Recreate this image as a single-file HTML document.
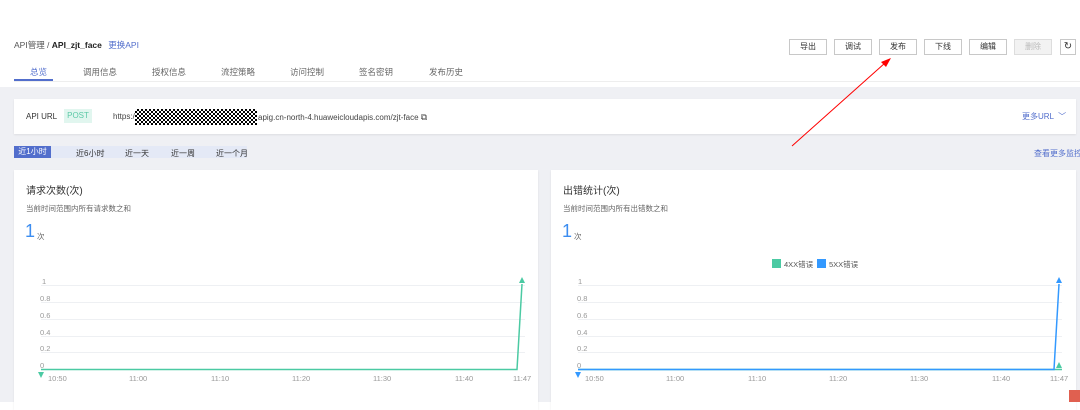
<!DOCTYPE html><html><head><meta charset="utf-8"><style>
*{margin:0;padding:0;box-sizing:border-box}
body{width:1080px;height:402px;overflow:hidden;background:#fff;font-family:"Liberation Sans","Noto Sans CJK SC",sans-serif;font-size:8px;color:#333;position:relative}
.a{position:absolute;white-space:nowrap}
.btn{position:absolute;top:39px;height:16px;width:38px;border:1px solid #c8c8c8;background:#fff;font-size:8px;text-align:center;line-height:14px;color:#333}
.card{position:absolute;background:#fff;box-shadow:0 1px 2px rgba(0,0,0,.08)}
.grid{position:absolute;height:1px;background:#eef0f3}
.yl{position:absolute;font-size:7.5px;color:#999}
.xl{position:absolute;font-size:7.5px;color:#999}
</style></head><body>
<div class="a" style="left:14px;top:39px;font-size:8.5px;color:#555">API管理 / <b style="color:#222">API_zjt_face</b> <span style="color:#526ecc;margin-left:4px">更换API</span></div>
<div class="btn" style="left:789px">导出</div>
<div class="btn" style="left:834px">调试</div>
<div class="btn" style="left:879px">发布</div>
<div class="btn" style="left:924px">下线</div>
<div class="btn" style="left:969px">编辑</div>
<div class="btn" style="left:1014px;background:#f2f2f2;color:#bbb;border-color:#ddd">删除</div>
<div class="btn" style="left:1060px;width:16px;font-size:10px">↻</div>
<div class="a" style="left:14px;top:66px;font-size:8.5px;color:#666">
<span class="a" style="left:16px;color:#526ecc">总览</span>
<span class="a" style="left:69px">调用信息</span>
<span class="a" style="left:138px">授权信息</span>
<span class="a" style="left:207px">流控策略</span>
<span class="a" style="left:276px">访问控制</span>
<span class="a" style="left:345px">签名密钥</span>
<span class="a" style="left:415px">发布历史</span>
</div>
<div class="a" style="left:14px;top:79px;width:39px;height:2px;background:#526ecc"></div>
<div class="a" style="left:14px;top:81px;width:1066px;height:1px;background:#eee"></div>
<div class="a" style="left:0;top:87px;width:1080px;height:315px;background:#eff0f4"></div>
<div class="card" style="left:14px;top:99px;width:1062px;height:35px"></div>
<div class="a" style="left:26px;top:112px;color:#333">API URL</div>
<div class="a" style="left:64px;top:109px;width:28px;height:14px;background:#e1f6ef;color:#5cc9a7;text-align:center;line-height:14px">POST</div>
<div class="a" style="left:113px;top:112px;color:#444">https:/</div>
<div class="a" style="left:135px;top:109px;width:122px;height:16px;background:repeating-conic-gradient(#000 0 25%,#fff 0 50%) 0 0/4px 4px"></div>
<div class="a" style="left:258px;top:112px;color:#444">apig.cn-north-4.huaweicloudapis.com/zjt-face <span style="font-size:9px">⧉</span></div>
<div class="a" style="left:1022px;top:111px;color:#526ecc">更多URL &nbsp;﹀</div>
<div class="a" style="left:14px;top:146px;width:233px;height:12px;background:#e4e9f6"></div>
<div class="a" style="left:14px;top:146px;width:37px;height:12px;background:#526ecc;color:#fff;text-align:center;line-height:12px">近1小时</div>
<div class="a" style="left:76px;top:148px">近6小时</div>
<div class="a" style="left:125px;top:148px">近一天</div>
<div class="a" style="left:171px;top:148px">近一周</div>
<div class="a" style="left:216px;top:148px">近一个月</div>
<div class="a" style="left:1034px;top:148px;color:#526ecc">查看更多监控</div>
<div class="card" style="left:14px;top:170px;width:524px;height:240px"></div>
<div class="card" style="left:551px;top:170px;width:525px;height:240px"></div>
<div class="a" style="left:26px;top:182px;font-size:10px">请求次数(次)</div>
<div class="a" style="left:26px;top:203px;font-size:7.5px;color:#666">当前时间范围内所有请求数之和</div>
<div class="a" style="left:25px;top:221px;font-size:18px;color:#3c8df0">1</div>
<div class="a" style="left:37px;top:231px;font-size:7.5px;color:#666">次</div>
<div class="a" style="left:563px;top:182px;font-size:10px">出错统计(次)</div>
<div class="a" style="left:563px;top:203px;font-size:7.5px;color:#666">当前时间范围内所有出错数之和</div>
<div class="a" style="left:562px;top:221px;font-size:18px;color:#3c8df0">1</div>
<div class="a" style="left:574px;top:231px;font-size:7.5px;color:#666">次</div>
<div class="a" style="left:772px;top:259px;width:9px;height:9px;background:#4bcaa3"></div>
<div class="a" style="left:784px;top:259px;font-size:7.5px;color:#555">4XX错误</div>
<div class="a" style="left:817px;top:259px;width:9px;height:9px;background:#3399ff"></div>
<div class="a" style="left:829px;top:259px;font-size:7.5px;color:#555">5XX错误</div>
<svg class="a" style="left:0;top:0" width="1080" height="402">
<g stroke="#eef0f3">
<line x1="41" y1="285.5" x2="525" y2="285.5"/><line x1="41" y1="302.5" x2="525" y2="302.5"/><line x1="41" y1="319.5" x2="525" y2="319.5"/><line x1="41" y1="336.5" x2="525" y2="336.5"/><line x1="41" y1="352.5" x2="525" y2="352.5"/>
<line x1="578" y1="285.5" x2="1062" y2="285.5"/><line x1="578" y1="302.5" x2="1062" y2="302.5"/><line x1="578" y1="319.5" x2="1062" y2="319.5"/><line x1="578" y1="336.5" x2="1062" y2="336.5"/><line x1="578" y1="352.5" x2="1062" y2="352.5"/>
</g>
<polyline points="41,369.5 517,369.5 522,284" fill="none" stroke="#4bcaa3" stroke-width="1.5"/>
<polygon points="519,283 525,283 522,277" fill="#4bcaa3"/>
<polygon points="38,372 44,372 41,378" fill="#4bcaa3"/>
<polyline points="578,369.5 1062,369.5" fill="none" stroke="#4bcaa3" stroke-width="1.5"/>
<polygon points="1056,368 1062,368 1059,362" fill="#4bcaa3"/>
<polyline points="578,369.5 1054,369.5 1059,284" fill="none" stroke="#3399ff" stroke-width="1.5"/>
<polygon points="1056,283 1062,283 1059,277" fill="#3399ff"/>
<polygon points="575,372 581,372 578,378" fill="#3399ff"/>
<line x1="792" y1="146" x2="885" y2="63" stroke="#f00" stroke-width="1"/>
<polygon points="891,58 881,62 886,67" fill="#f00"/>
<rect x="1069" y="390" width="11" height="12" fill="#e06050"/>
</svg>
<div class="yl" style="left:42px;top:277px">1</div><div class="yl" style="left:40px;top:294px">0.8</div><div class="yl" style="left:40px;top:311px">0.6</div><div class="yl" style="left:40px;top:328px">0.4</div><div class="yl" style="left:40px;top:344px">0.2</div><div class="yl" style="left:40px;top:361px">0</div>
<div class="yl" style="left:578px;top:277px">1</div><div class="yl" style="left:577px;top:294px">0.8</div><div class="yl" style="left:577px;top:311px">0.6</div><div class="yl" style="left:577px;top:328px">0.4</div><div class="yl" style="left:577px;top:344px">0.2</div><div class="yl" style="left:577px;top:361px">0</div>
<div class="xl" style="left:48px;top:374px">10:50</div><div class="xl" style="left:129px;top:374px">11:00</div><div class="xl" style="left:211px;top:374px">11:10</div><div class="xl" style="left:292px;top:374px">11:20</div><div class="xl" style="left:373px;top:374px">11:30</div><div class="xl" style="left:455px;top:374px">11:40</div><div class="xl" style="left:513px;top:374px">11:47</div>
<div class="xl" style="left:585px;top:374px">10:50</div><div class="xl" style="left:666px;top:374px">11:00</div><div class="xl" style="left:748px;top:374px">11:10</div><div class="xl" style="left:829px;top:374px">11:20</div><div class="xl" style="left:910px;top:374px">11:30</div><div class="xl" style="left:992px;top:374px">11:40</div><div class="xl" style="left:1050px;top:374px">11:47</div>
</body></html>
